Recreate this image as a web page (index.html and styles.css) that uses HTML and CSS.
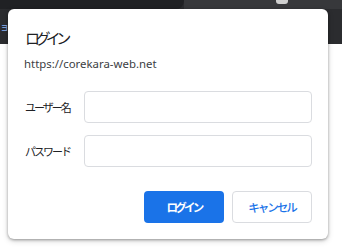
FILE: index.html
```html
<!DOCTYPE html>
<html lang="ja">
<head>
<meta charset="utf-8">
<title>ログイン</title>
<link rel="stylesheet" href="styles.css">
</head>
<body>
<div class="chrome">
  <div class="tabstrip">
    <div class="tab-dark"></div>
    <div class="tab-light"><span class="tab-knob"></span></div>
  </div>
  <div class="toolbar"><span class="glyph">ョ</span></div>
</div>
<div class="page"></div>

<div class="dialog">
  <div class="title">ログイン</div>
  <div class="origin">https://corekara-web.net</div>
  <div class="form">
    <div class="row">
      <span class="label">ユーザー名</span>
      <span class="input"></span>
    </div>
    <div class="row">
      <span class="label">パスワード</span>
      <span class="input"></span>
    </div>
  </div>
  <div class="actions">
    <span class="btn btn-primary">ログイン</span>
    <span class="btn btn-secondary">キャンセル</span>
  </div>
</div>
</body>
</html>
```

FILE: styles.css
```css
* { box-sizing: border-box; }
html, body { margin: 0; padding: 0; }
body {
  width: 342px;
  height: 248px;
  overflow: hidden;
  background: #ffffff;
  font-family: "Noto Sans", "Noto Sans CJK JP", sans-serif;
  color: #202124;
}
.chrome { height: 44px; background: #2b2c2f; }
.tabstrip { height: 9px; display: flex; }
.tab-dark { width: 184px; background: #202124; border-bottom-right-radius: 8px; }
.tab-light { flex: 1; background: #37383b; position: relative; }
.tab-knob {
  position: absolute; left: 92px; top: 0; width: 12px; height: 4px;
  background: #cfcfcf; border-radius: 0 0 3px 3px;
}
.toolbar { height: 35px; display: flex; align-items: center; }
.glyph { color: #8ab4f8; font-size: 9px; line-height: 1; }

.dialog {
  position: absolute;
  left: 8px; top: 9px;
  width: 320px; height: 230px;
  background: #fff;
  border-radius: 6px;
  box-shadow: 0 1px 3px rgba(0,0,0,0.35), 0 2px 6px rgba(0,0,0,0.15);
  padding: 19px 16px 16px 16px;
  display: flex;
  flex-direction: column;
}
.title {
  font-size: 15px;
  line-height: 20px;
  height: 20px;
  letter-spacing: -4.6px;
  padding-left: 1px;
  color: #202124;
}
.origin {
  margin-top: 6px;
  font-size: 11.4px;
  line-height: 20px;
  height: 20px;
  color: #3c4043;
}
.form {
  margin-top: 17px;
  display: flex;
  flex-direction: column;
  gap: 12px;
}
.row { display: flex; align-items: center; height: 32px; }
.label {
  width: 60px;
  font-size: 11px;
  letter-spacing: -2px;
  color: #202124;
  padding-left: 1px;
}
.input {
  flex: 1;
  height: 32px;
  border: 1px solid #dadce0;
  border-radius: 4px;
}
.actions {
  margin-top: 24px;
  display: flex;
  justify-content: flex-end;
  gap: 8px;
}
.btn {
  width: 80px;
  height: 32px;
  border-radius: 4px;
  display: flex;
  align-items: center;
  justify-content: center;
  font-size: 11.5px;
}
.btn-primary {
  background: #1a73e8;
  color: #fff;
  font-weight: 700;
  letter-spacing: -2.8px;
}
.btn-secondary {
  border: 1px solid #dadce0;
  color: #1a73e8;
  font-weight: 500;
  letter-spacing: -2px;
}
```
